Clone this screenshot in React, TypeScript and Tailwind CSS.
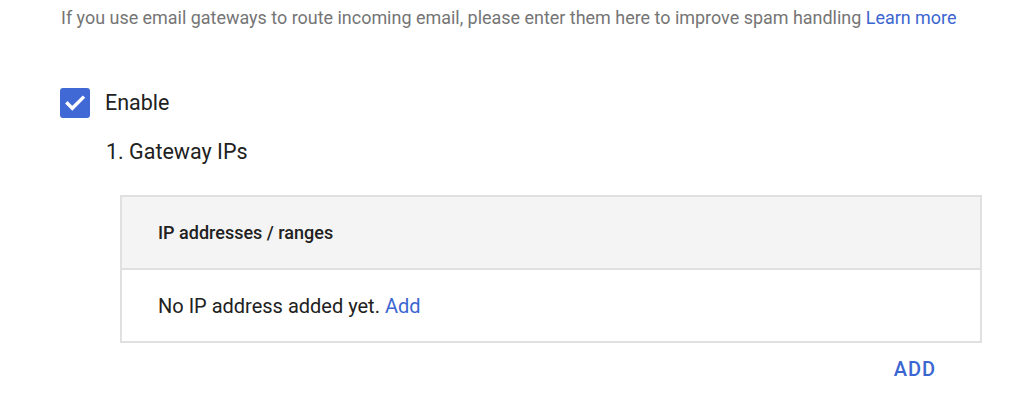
import React from "react";

export default function App() {
  return (
    <div className="w-[1014px] h-[416px] bg-white overflow-hidden" style={{ fontFamily: "Roboto, 'Liberation Sans', sans-serif" }}>
      <div className="pl-[60px] pt-[6px]">
        <p className="pl-[1px] text-[17.95px] leading-[24px] text-[#757575] whitespace-nowrap">
          If you use email gateways to route incoming email, please enter them here to improve spam handling{" "}
          <span className="text-[#3b66d1]">Learn more</span>
        </p>
        <div className="mt-[58px] flex items-center">
          <div className="w-[30px] h-[30px] rounded-[3px] bg-[#4169d6] flex items-center justify-center">
            <svg width="24" height="24" viewBox="0 0 24 24">
              <path d="M4.5 12.5l4.8 4.8L19.8 6.8" fill="none" stroke="white" strokeWidth="3.4" strokeLinecap="square" />
            </svg>
          </div>
          <span className="ml-[15px] text-[21.5px] leading-[28px] text-[#212121]">Enable</span>
        </div>
        <div className="ml-[46px] mt-[20px] text-[21.5px] leading-[28px] text-[#212121]">1. Gateway IPs</div>
        <div className="ml-[60px] mt-[29px] w-[862px] border-2 border-[#e0e0e0]">
          <div className="h-[73px] bg-[#f4f4f4] flex items-center pl-[36px] border-b-2 border-[#e0e0e0] text-[18px] font-medium text-[#212121]">
            IP addresses / ranges
          </div>
          <div className="h-[71px] flex items-center pl-[36px] pt-[1px] text-[20px] text-[#212121]">
            No IP address added yet.&nbsp;<span className="text-[#3b66d1]">Add</span>
          </div>
        </div>
        <div className="w-[876px] flex justify-end mt-[14px]">
          <span className="text-[20px] leading-[24px] font-medium text-[#3b66d1] tracking-[1px]">ADD</span>
        </div>
      </div>
    </div>
  );
}
